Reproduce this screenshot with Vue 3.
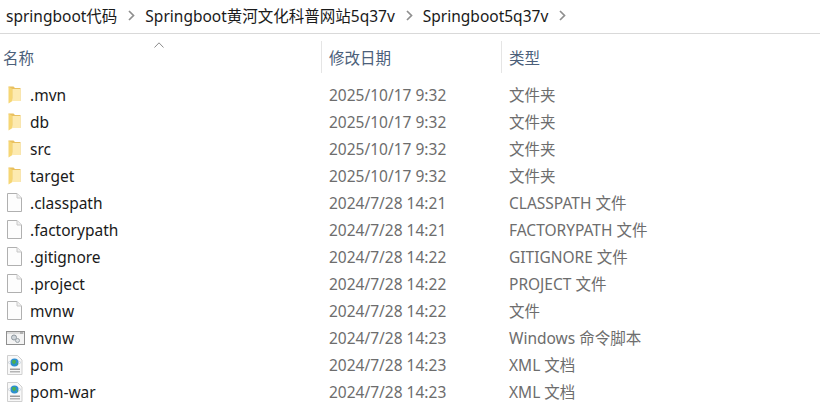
<script setup>
const crumbs = ['springboot代码', 'Springboot黄河文化科普网站5q37v', 'Springboot5q37v']
const rows = [
  { name: '.mvn', date: '2025/10/17 9:32', type: '文件夹', icon: 'folder' },
  { name: 'db', date: '2025/10/17 9:32', type: '文件夹', icon: 'folder' },
  { name: 'src', date: '2025/10/17 9:32', type: '文件夹', icon: 'folder' },
  { name: 'target', date: '2025/10/17 9:32', type: '文件夹', icon: 'folder' },
  { name: '.classpath', date: '2024/7/28 14:21', type: 'CLASSPATH 文件', icon: 'file' },
  { name: '.factorypath', date: '2024/7/28 14:21', type: 'FACTORYPATH 文件', icon: 'file' },
  { name: '.gitignore', date: '2024/7/28 14:22', type: 'GITIGNORE 文件', icon: 'file' },
  { name: '.project', date: '2024/7/28 14:22', type: 'PROJECT 文件', icon: 'file' },
  { name: 'mvnw', date: '2024/7/28 14:22', type: '文件', icon: 'file' },
  { name: 'mvnw', date: '2024/7/28 14:23', type: 'Windows 命令脚本', icon: 'cmd' },
  { name: 'pom', date: '2024/7/28 14:23', type: 'XML 文档', icon: 'xml' },
  { name: 'pom-war', date: '2024/7/28 14:23', type: 'XML 文档', icon: 'xml' },
]
</script>

<template>
  <div class="win">
    <nav class="crumbs">
      <template v-for="c in crumbs" :key="c">
        <span class="crumb">{{ c }}</span>
        <svg class="chev" width="7" height="11" viewBox="0 0 7 11"><path d="M1 1l4.500 4.500L1 10" fill="none" stroke="#8f8f8f" stroke-width="1.700"/></svg>
      </template>
    </nav>
    <header class="head">
      <svg class="sort" width="10" height="6" viewBox="0 0 10 6"><path d="M.5 5.500 5 .8l4.500 4.700" fill="none" stroke="#8c8c8c" stroke-width="1"/></svg>
      <div class="hc c1">名称</div>
      <div class="hc c2">修改日期</div>
      <div class="hc c3">类型</div>
    </header>
    <ul class="list">
      <li v-for="(r, i) in rows" :key="i" class="row">
        <div class="c1 namecell">
          <span class="ico">
            <svg v-if="r.icon === 'folder'" class="i-folder" width="13" height="18" viewBox="0 0 13 18">
              <path d="M.5 .5h5l1.500 1.500h5.500v13H5z" fill="#e9c05f"/>
              <path d="M.5 .5 4.500 3v12L.5 17.500z" fill="#f6d674"/>
              <path d="M4.500 3h8v12h-8z" fill="#fdeab0"/>
            </svg>
            <svg v-else-if="r.icon === 'file'" width="15" height="19" viewBox="0 0 15 19">
              <path d="M.5 .5h9.500l4.500 4.500v13.500H.5z" fill="#fdfdfd" stroke="#b0b0b0"/>
              <path d="M10 .5v4.500h4.500" fill="#f0f0f0" stroke="#c8c8c8"/>
            </svg>
            <svg v-else-if="r.icon === 'cmd'" class="i-cmd" width="19" height="14" viewBox="0 0 19 14">
              <rect x=".5" y=".5" width="18" height="13" fill="#f4f4f4" stroke="#8f8f8f"/>
              <rect x="1" y="1" width="17" height="2" fill="#dcdcdc"/>
              <circle cx="8" cy="6.500" r="2.500" fill="#cfd5da" stroke="#8e979e"/>
              <circle cx="11.500" cy="9.500" r="2" fill="#dfe3e6" stroke="#9aa2a8"/>
              <path d="M14 2h3" stroke="#888" stroke-width="1"/>
            </svg>
            <svg v-else width="16" height="20" viewBox="0 0 16 20">
              <path d="M.5 .5h10l4.500 4.500v14.500H.5z" fill="#f8f8f8" stroke="#cfcfcf"/>
              <path d="M1 7.500c3-3 10-3 13 0M1 7.500c3 3 10 3 13 0" fill="none" stroke="#c9d2da" stroke-width=".8"/>
              <circle cx="7.500" cy="7.500" r="4" fill="#2c8fd0"/>
              <path d="M5.500 5h3l.5 2.500-2 2-2-2zM9.500 8.500l1.500-.5-.5 2.500z" fill="#4caf50"/>
              <rect x="3" y="13.500" width="10" height="1.500" fill="#9a9a9a"/>
              <rect x="3" y="16" width="10" height="1.500" fill="#b4b4b4"/>
            </svg>
          </span>
          <span class="name">{{ r.name }}</span>
        </div>
        <div class="c2 meta">{{ r.date }}</div>
        <div class="c3 meta">{{ r.type }}</div>
      </li>
    </ul>
  </div>
</template>

<style scoped>
.win {
  width: 820px;
  height: 408px;
  overflow: hidden;
  background: #fff;
  font-family: "Noto Sans", "Noto Sans CJK SC", sans-serif;
  font-size: 15.500px;
}
.crumbs {
  height: 31px;
  padding-bottom: 2px;
  border-bottom: 1px solid #d9d9d9;
  display: flex;
  align-items: center;
  padding-left: 6px;
  color: #1a1a1a;
}
.chev { margin: 0 10px 0 11px; }
.head {
  position: relative;
  display: flex;
  height: 32px;
  margin-top: 7px;
  color: #4c607a;
}
.sort { position: absolute; left: 154px; top: 1px; }
.hc { line-height: 34px; }
.c1 { width: 322px; flex: none; }
.c2 { width: 180px; flex: none; padding-left: 7px; box-sizing: border-box; }
.c3 { flex: 1; padding-left: 7px; }
.head .c1 { width: 321px; padding-left: 3px; box-sizing: border-box; }
.head .c2, .head .c3 { border-left: 1px solid #e5e5e5; }
.list { list-style: none; margin: 8px 0 0; padding: 0; }
.row { display: flex; height: 27px; align-items: center; }
.namecell { display: flex; align-items: center; }
.ico { width: 30px; padding-left: 7px; box-sizing: border-box; display: flex; align-items: center; flex: none; }
.i-folder { margin-left: 1px; }
.i-cmd { margin-left: -1px; }
.name { color: #1a1a1a; }
.meta { color: #6d6d6d; }
</style>
